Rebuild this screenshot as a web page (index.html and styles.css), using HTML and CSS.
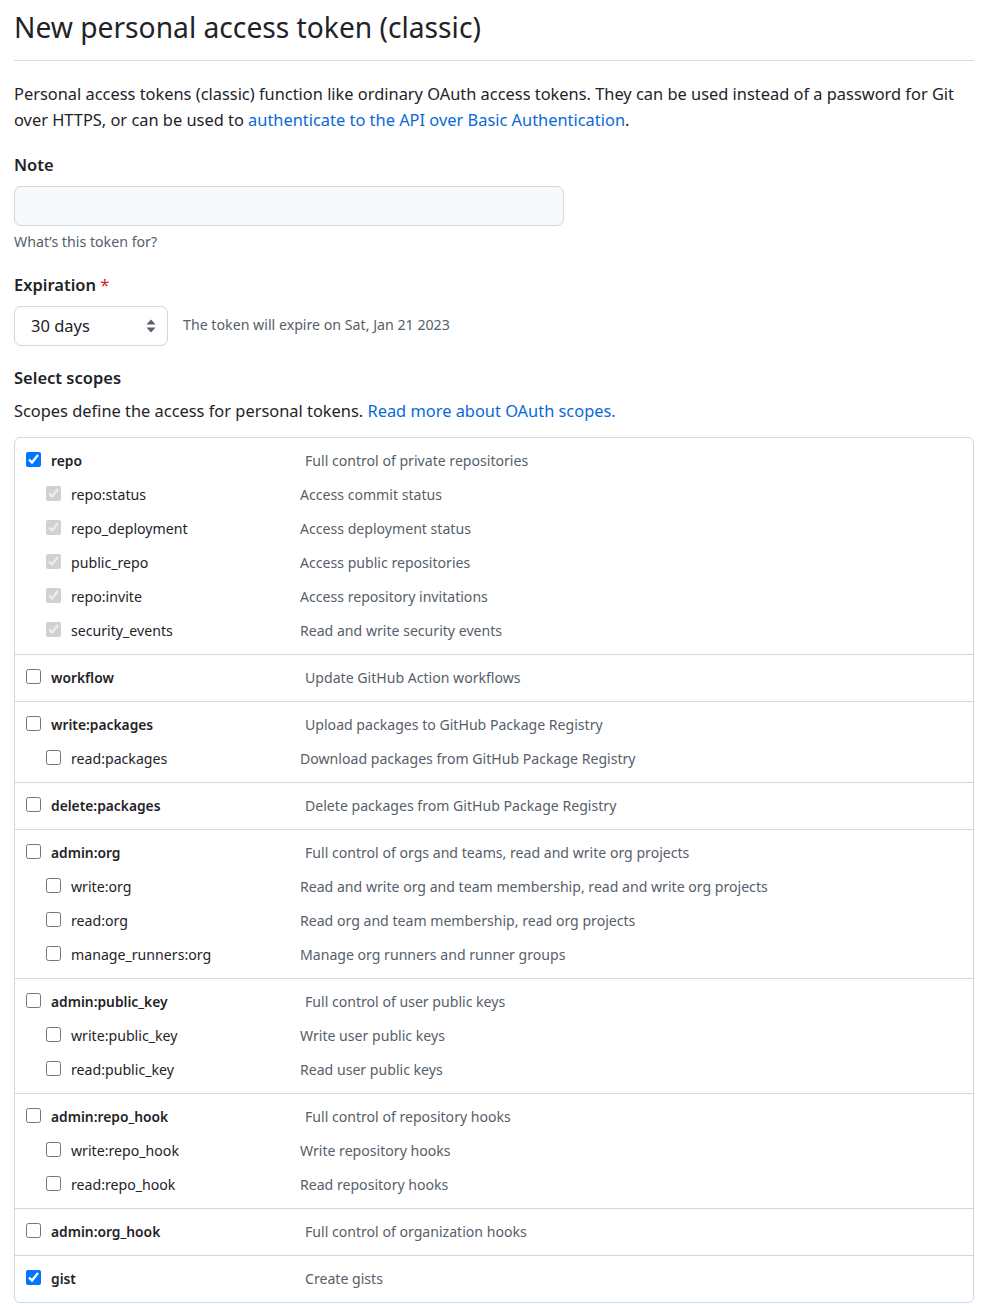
FILE: index.html
```html
<!DOCTYPE html>
<html lang="en">
<head>
<meta charset="utf-8">
<title>New personal access token (classic)</title>
<link rel="stylesheet" href="styles.css">
</head>
<body>
<div class="page">
  <h1 class="title">New personal access token (classic)</h1>
  <p class="intro">Personal access tokens (classic) function like ordinary OAuth access tokens. They can be used instead of a password for Git over HTTPS, or can be used to <a href="#">authenticate to the API over Basic Authentication</a>.</p>

  <div class="field">
    <label class="field-label" for="note">Note</label>
    <input class="note-input" id="note" type="text">
    <p class="hint">What’s this token for?</p>
  </div>

  <div class="field field-wide">
    <div class="field-label">Expiration <span class="req">*</span></div>
    <div class="expire-row">
      <div class="select">
        <span>30 days</span>
        <svg class="select-arrow" width="10" height="16" viewBox="0 0 10 16"><path d="M5 1.5 L9.5 6.5 H0.5 Z M5 14.5 L9.5 9.5 H0.5 Z" fill="#57606a"/></svg>
      </div>
      <span class="expire-note">The token will expire on Sat, Jan 21 2023</span>
    </div>
  </div>

  <div class="field">
    <div class="field-label">Select scopes</div>
    <p class="scopes-desc">Scopes define the access for personal tokens. <a href="#">Read more about OAuth scopes.</a></p>
  </div>

  <div class="scopes">
    <div class="group">
      <div class="row top"><label class="lbl"><input type="checkbox" checked><span>repo</span></label><span class="desc">Full control of private repositories</span></div>
      <div class="row sub"><label class="lbl"><input type="checkbox" checked disabled><span>repo:status</span></label><span class="desc">Access commit status</span></div>
      <div class="row sub"><label class="lbl"><input type="checkbox" checked disabled><span>repo_deployment</span></label><span class="desc">Access deployment status</span></div>
      <div class="row sub"><label class="lbl"><input type="checkbox" checked disabled><span>public_repo</span></label><span class="desc">Access public repositories</span></div>
      <div class="row sub"><label class="lbl"><input type="checkbox" checked disabled><span>repo:invite</span></label><span class="desc">Access repository invitations</span></div>
      <div class="row sub"><label class="lbl"><input type="checkbox" checked disabled><span>security_events</span></label><span class="desc">Read and write security events</span></div>
    </div>
    <div class="group">
      <div class="row top"><label class="lbl"><input type="checkbox"><span>workflow</span></label><span class="desc">Update GitHub Action workflows</span></div>
    </div>
    <div class="group">
      <div class="row top"><label class="lbl"><input type="checkbox"><span>write:packages</span></label><span class="desc">Upload packages to GitHub Package Registry</span></div>
      <div class="row sub"><label class="lbl"><input type="checkbox"><span>read:packages</span></label><span class="desc">Download packages from GitHub Package Registry</span></div>
    </div>
    <div class="group">
      <div class="row top"><label class="lbl"><input type="checkbox"><span>delete:packages</span></label><span class="desc">Delete packages from GitHub Package Registry</span></div>
    </div>
    <div class="group">
      <div class="row top"><label class="lbl"><input type="checkbox"><span>admin:org</span></label><span class="desc">Full control of orgs and teams, read and write org projects</span></div>
      <div class="row sub"><label class="lbl"><input type="checkbox"><span>write:org</span></label><span class="desc">Read and write org and team membership, read and write org projects</span></div>
      <div class="row sub"><label class="lbl"><input type="checkbox"><span>read:org</span></label><span class="desc">Read org and team membership, read org projects</span></div>
      <div class="row sub"><label class="lbl"><input type="checkbox"><span>manage_runners:org</span></label><span class="desc">Manage org runners and runner groups</span></div>
    </div>
    <div class="group">
      <div class="row top"><label class="lbl"><input type="checkbox"><span>admin:public_key</span></label><span class="desc">Full control of user public keys</span></div>
      <div class="row sub"><label class="lbl"><input type="checkbox"><span>write:public_key</span></label><span class="desc">Write user public keys</span></div>
      <div class="row sub"><label class="lbl"><input type="checkbox"><span>read:public_key</span></label><span class="desc">Read user public keys</span></div>
    </div>
    <div class="group">
      <div class="row top"><label class="lbl"><input type="checkbox"><span>admin:repo_hook</span></label><span class="desc">Full control of repository hooks</span></div>
      <div class="row sub"><label class="lbl"><input type="checkbox"><span>write:repo_hook</span></label><span class="desc">Write repository hooks</span></div>
      <div class="row sub"><label class="lbl"><input type="checkbox"><span>read:repo_hook</span></label><span class="desc">Read repository hooks</span></div>
    </div>
    <div class="group">
      <div class="row top"><label class="lbl"><input type="checkbox"><span>admin:org_hook</span></label><span class="desc">Full control of organization hooks</span></div>
    </div>
    <div class="group">
      <div class="row top"><label class="lbl"><input type="checkbox" checked><span>gist</span></label><span class="desc">Create gists</span></div>
    </div>
  </div>
</div>
</body>
</html>
```
FILE: styles.css
```css
* { box-sizing: border-box; }
html, body { margin: 0; padding: 0; background: #ffffff; }
body {
  font-family: "Noto Sans", "Open Sans", sans-serif;
  color: #1f2328;
  font-size: 16.4px;
  line-height: 26px;
}
a { color: #0969da; text-decoration: none; }
.page { padding: 0 14px; width: 988px; }
.title {
  margin: 0;
  padding: 9px 0 14px;
  font-size: 28.2px;
  font-weight: 400;
  line-height: 37px;
  border-bottom: 1px solid #d8dee4;
}
.intro { margin: 20px 0 0; }
.field { margin-top: 19px; }
.field-wide { margin-top: 20px; }
.field-label { display: block; font-weight: 600; font-size: 16.5px; line-height: 26px; }
.req { color: #cf222e; font-weight: 400; }
.note-input {
  display: block;
  margin-top: 8px;
  width: 550px;
  height: 40px;
  border: 1px solid #d0d7de;
  border-radius: 7px;
  background: #f6f8fa;
  font: inherit;
  padding: 0 12px;
}
.hint { margin: 6px 0 0; font-size: 14.2px; line-height: 20px; color: #57606a; }
.expire-row { margin-top: 8px; display: flex; align-items: center; gap: 15px; }
.select {
  width: 154px;
  height: 40px;
  border: 1px solid #d0d7de;
  border-radius: 7px;
  background: #ffffff;
  display: flex;
  align-items: center;
  justify-content: space-between;
  padding: 0 11px 0 16px;
  font-size: 16.5px;
}
.expire-note { font-size: 14.2px; color: #57606a; line-height: 20px; margin-top: -3px; }
.scopes-desc { margin: 7px 0 0; }
.scopes {
  margin-top: 13px;
  width: 960px;
  border: 1px solid #d0d7de;
  border-radius: 6px;
}
.group { padding: 6px 0; }
.group + .group { border-top: 1px solid #d0d7de; }
.row { display: flex; align-items: center; height: 34px; }
.row.top { padding-left: 11px; }
.row.sub { padding-left: 31px; }
.lbl { display: flex; align-items: center; gap: 10px; font-size: 14.15px; }
.row.top .lbl { width: 279px; font-weight: 600; font-size: 13.8px; }
.row.sub .lbl { width: 254px; }
.lbl input {
  margin: 0 0 4px;
  width: 15px;
  height: 15px;
  flex: none;
}
.desc { font-size: 14.1px; color: #57606a; }
```
